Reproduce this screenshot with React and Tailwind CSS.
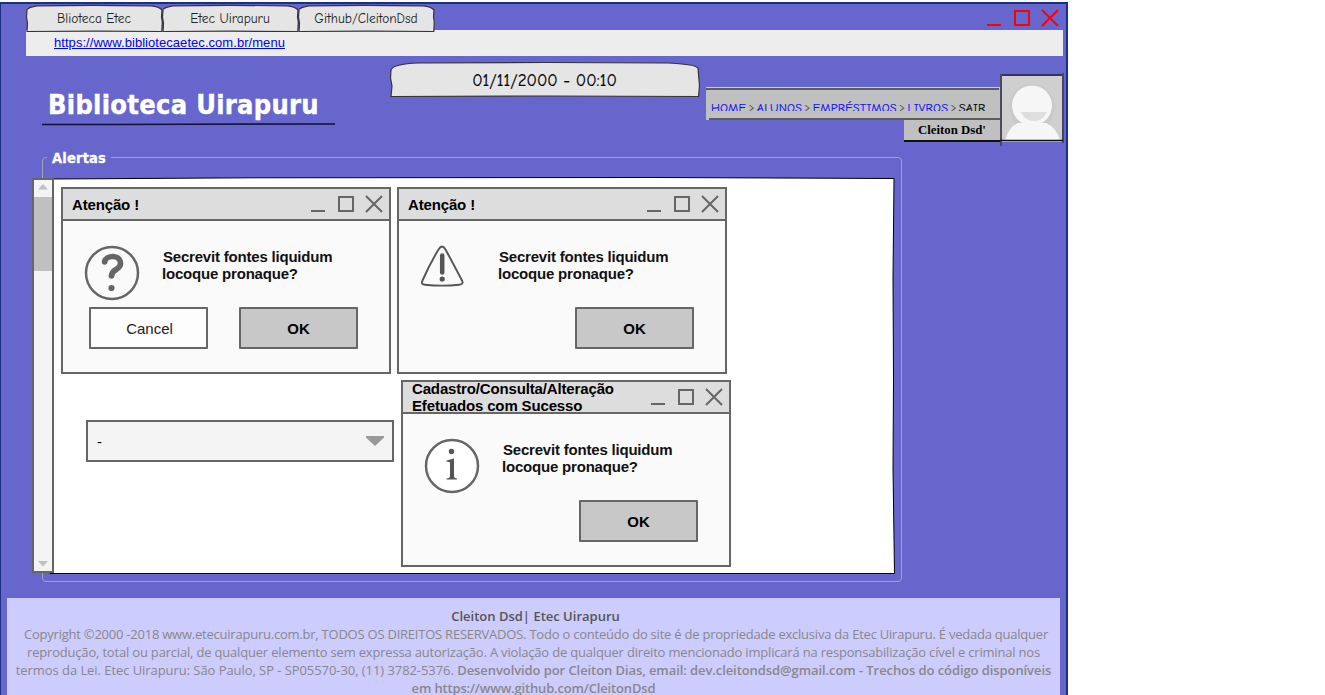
const HAND = "font-['Comic_Sans_MS','Comic_Neue',Lato,sans-serif]";

function T({ className = '', children }) {
  return <span className={`inline-block whitespace-nowrap ${className}`}>{children}</span>;
}

function Tab({ children }) {
  return (
    <div className={`relative h-[27px] w-[136px] text-center text-[13.4px] leading-[27px] text-[#222] ${HAND}`}>
      <svg className="absolute inset-0 overflow-visible" width="136" height="27" viewBox="0 0 136 27">
        <path d="M1 26.5 L1.5 18 L.5 12 L1 4.500 Q3 2 11 .8 L66 .3 L125 .8 Q133 1.500 136 5 L135.500 12 L136.300 17 L135.800 26.500 L70 26.200 Z" fill="#e5e5e5" stroke="#33333b" strokeWidth="1.200" />
      </svg>
      <T className="relative">{children}</T>
    </div>
  );
}

function WindowIcons({ color, className = '' }) {
  return (
    <svg className={className} width="74" height="20" viewBox="0 0 74 20" fill="none" stroke={color} strokeWidth="2">
      <path d="M1 17H15M29 3H43V17H29ZM56 2L72 18M72 2L56 18" />
    </svg>
  );
}

function Button({ primary, children }) {
  return (
    <button className={`h-[42px] w-[119px] rounded-[1px] border-2 border-[#666] text-[15px] ${primary ? 'bg-[#c8c8c8] font-bold text-black' : 'bg-[#fdfdfd] pl-[2px] text-[#222]'}`}>
      <T className="pt-[2px]">{children}</T>
    </button>
  );
}

function Dialog({ title, icon, cancel, className = '' }) {
  return (
    <section className={`flex h-[187px] w-[330px] flex-col border-2 border-[#666] bg-[#fafafa] font-['Liberation_Sans',Arial,sans-serif] ${className}`}>
      <header className="flex h-[32px] shrink-0 items-center justify-between border-b-2 border-[#666] bg-[#ddd] pl-[9px] pr-[5px] text-[15px] font-bold leading-[17px] tracking-[-0.15px] text-black">
        <div>{title}</div>
        <WindowIcons color="#666" />
      </header>
      <div className="flex h-[86px] shrink-0">
        <div className="w-[99px] pl-[19px] pt-[22px]">{icon}</div>
        <p className="pt-[27px] text-[15px] font-bold leading-[17px] tracking-[-0.2px] text-[#111]">
          <T className="pl-px">Secrevit fontes liquidum</T><br /><T>locoque pronaque?</T>
        </p>
      </div>
      <div className="flex justify-end gap-[31px] pr-[31px]">
        {cancel && <Button>Cancel</Button>}
        <Button primary>OK</Button>
      </div>
    </section>
  );
}

const question = (
  <svg width="58" height="58" viewBox="0 0 58 58" fill="none">
    <circle cx="30" cy="30" r="26" stroke="#666" strokeWidth="2.500" />
    <path d="M22.300 19C24.500 11.500 38.500 11.500 38.500 20.500C38.500 27.500 29.500 25.500 29.500 33" stroke="#666" strokeWidth="5.600" />
    <circle cx="22.600" cy="19" r="2.800" fill="#666" />
    <circle cx="29.500" cy="33" r="2.800" fill="#666" />
    <circle cx="29.500" cy="45" r="3.100" fill="#666" />
  </svg>
);
const warning = (
  <svg width="58" height="58" viewBox="0 0 58 58" fill="none">
    <path d="M20.500 6.500C23 2.500 25 2.500 27.500 6.500Q37 24 44 37.500Q46 41.500 41 41.700Q24 43.500 7 41.700Q2.500 41.500 4.500 37.500Q12 20.500 20.500 6.500Z" stroke="#555" strokeWidth="1.900" />
    <path d="M24.200 12.500V29.500" stroke="#555" strokeWidth="4.500" strokeLinecap="round" />
    <circle cx="24.200" cy="36" r="2.600" fill="#555" />
  </svg>
);
const info = (
  <svg width="58" height="58" viewBox="0 0 58 58" fill="none">
    <circle cx="30" cy="30" r="28" fill="#fff" />
    <circle cx="30" cy="30" r="26" stroke="#666" strokeWidth="2.500" />
    <circle cx="29.500" cy="15.500" r="2.700" fill="#555" />
    <path d="M24.500 24.500L32 22.500V40Q32 42 35 42.500V43.500H24.500V42.500Q28 42 28 40V27Q28 25.500 24.500 25.500Z" fill="#555" />
  </svg>
);

function Sep() {
  return <i className="relative -top-px px-[2.3px] text-[11px] not-italic text-[#555]">&gt;</i>;
}

export default function App() {
  return (
    <div className="flex h-[695px] w-[1325px] overflow-hidden bg-white">
      <main className="mt-[2px] flex h-[693px] w-[1068px] shrink-0 flex-col overflow-hidden border-l border-r-2 border-t-2 border-[#1a3080] bg-[#6666cc]">
        <div className="z-10 flex h-[26px] items-start justify-between pl-[25px] pr-[6px] pt-[1px]">
          <nav className="flex">
            <Tab>Blioteca Etec</Tab>
            <Tab>Etec Uirapuru</Tab>
            <Tab>Github/CleitonDsd</Tab>
          </nav>
          <WindowIcons color="#f00" className="mt-[3px]" />
        </div>
        <div className="ml-[25px] mr-[3px] h-[26px] shrink-0 bg-[#ededed] pl-[28px] text-[13px] leading-[26px] font-['Liberation_Sans',Arial,sans-serif]">
          <a className="text-[#0000ff]"><T className="tracking-[0.05px] underline">https://www.bibliotecaetec.com.br/menu</T></a>
        </div>
        <header className="flex h-[90px] shrink-0">
          <div className="w-[348px] pl-[41px]">
            <h1 className="mt-[30px] h-[37px] pl-[6px] text-[27px] font-bold leading-[37px] tracking-[0.3px] text-white font-['DejaVu_Sans_Condensed','DejaVu_Sans',sans-serif] [-webkit-text-stroke:0.4px_white]"><T>Biblioteca Uirapuru</T></h1>
            <svg width="294" height="3" viewBox="0 0 294 3"><path d="M0 1.500H70L220 1H293" stroke="#111133" strokeWidth="1.600" /></svg>
          </div>
          <div className={`relative ml-[41px] mt-[6px] h-[35px] w-[310px] text-center text-[17.05px] leading-[37px] text-black [-webkit-text-stroke:0.2px_black] ${HAND}`}>
            <svg className="absolute inset-0 overflow-visible" width="310" height="35" viewBox="0 0 310 35">
              <path d="M1 34.500L2 24L.5 16L1 8Q3 2 28 1L155 .5L277 1Q304 2 308 6L309 18L309.500 24L308.500 34.500L160 34Z" fill="#e5e5e5" stroke="#33333b" strokeWidth="1.200" />
            </svg>
            <T className="relative pr-px">01/11/2000 - 00:10</T>
          </div>
          <div className="ml-[6px] w-[295px]">
            <div className="mt-[31px] h-[33px] border-t border-[#ccc] bg-[#c0c0c0]">
              <div className="h-[2px] w-[293px] bg-[#5c5c5c]" />
              <nav className={`mt-[8px] h-[13px] overflow-hidden pl-[5px] text-[12.3px] leading-[20px] tracking-[0.16px] text-[#0d0dff] [-webkit-text-stroke:0.15px_currentColor] ${HAND}`}>
                <T>HOME<Sep />ALUNOS<Sep />EMPRÉSTIMOS<Sep />LIVROS<Sep /><span className="text-black">SAIR</span></T>
              </nav>
              <div className="ml-[3px] mt-[7px] h-[2px] bg-[#5c5c5c]" />
            </div>
            <div className="ml-[198px] h-[22px] border-b-2 border-[#111] bg-[#c0c0c0] pl-[14px] text-[12.8px] font-bold leading-[21px] text-black font-['Liberation_Serif',serif]"><T>Cleiton Dsd&apos;</T></div>
          </div>
          <svg className="-ml-px mt-[17px]" width="64" height="74" viewBox="0 0 64 74">
            <rect x="0" y="2" width="63" height="67" fill="#cfcfcf" />
            <circle cx="32" cy="34" r="23" fill="#c4c4c4" opacity=".5" />
            <path d="M5 67Q9 54 18 50H46Q56 54 60 67Z" fill="#f6f6f6" />
            <circle cx="32" cy="32.500" r="20" fill="#f6f6f6" />
            <path d="M21 39H47Q43 48 34 48Q25 48 21 39Z" fill="#dedede" />
            <path d="M0 2H63" stroke="#333366" strokeWidth="2" />
            <path d="M1 1V73" stroke="#4a4a60" strokeWidth="2" />
            <path d="M63 0V70" stroke="#444466" strokeWidth="2" />
            <path d="M0 67.500H63" stroke="#111" strokeWidth="1.500" />
          </svg>
        </header>
        <div className="relative ml-[31px] mt-[3px] h-[434px] w-[871px] shrink-0">
          <div className="absolute left-[10px] top-[8px] h-[425px] w-[860px] rounded-[4px] border border-[#a3a3b8]" />
          <h2 className="relative ml-[15px] h-[18px] w-[64px] bg-[#6666cc] pl-[5px] text-[14.5px] font-bold leading-[18px] tracking-[0.2px] text-white font-['DejaVu_Sans_Condensed','DejaVu_Sans',sans-serif] [-webkit-text-stroke:0.3px_white]"><T>Alertas</T></h2>
          <div className="relative mt-[11px] flex">
            <div className="z-10 flex h-[395px] w-[22px] flex-col items-center border-2 border-[#666] bg-[#f4f4f4]">
              <svg width="18" height="17" viewBox="0 0 18 17"><path d="M4 9.500L9 4L14 9.500Z" fill="#c0c0c0" /></svg>
              <div className="h-[74px] w-full bg-[#c0c0c0]" />
              <svg className="mt-auto" width="18" height="17" viewBox="0 0 18 17"><path d="M4 7L9 12.500L14 7Z" fill="#c0c0c0" /></svg>
            </div>
            <div className="relative h-[396px] w-[842px]">
              <svg className="absolute inset-0 overflow-visible" width="842" height="396" viewBox="0 0 842 396">
                <path d="M-4 395.500V1L200 -.2L600 -.5L840 .5L839 100L839.500 200L839 290L840.500 395.500Z" fill="#fff" stroke="#000" strokeWidth="1" />
              </svg>
              <div className="relative grid grid-cols-[330px_334px] gap-x-[6px] gap-y-[6px] pl-[7px] pt-[9px]">
                <Dialog cancel icon={question} title={<T>Atenção !</T>} />
                <Dialog icon={warning} title={<T>Atenção !</T>} />
                <div className="ml-[25px] mt-[40px] flex h-[42px] w-[308px] items-center justify-between border-2 border-[#666] bg-[#f4f4f4] pl-[9px] pr-[7px] text-[15px] text-black font-['Liberation_Sans',Arial,sans-serif]">
                  <span className="pt-[3px]">-</span>
                  <svg width="20" height="12" viewBox="0 0 20 12"><path d="M1 1H19V2.500L10 11L1 2.500Z" fill="#999" /></svg>
                </div>
                <Dialog className="ml-[4px]" icon={info} title={<><T>Cadastro/Consulta/Alteração</T><br /><T>Efetuados com Sucesso</T></>} />
              </div>
            </div>
          </div>
        </div>
        <footer className="ml-[6px] mt-[15px] h-[100px] w-[1053px] shrink-0 bg-[#ccccff] pt-[9px] text-center text-[13px] leading-[18px] text-[#888] font-['Trebuchet_MS','Open_Sans',sans-serif]">
          <div className="pl-[4px] font-semibold text-[#555]"><T>Cleiton Dsd| Etec Uirapuru</T></div>
          <div className="pl-[5px] tracking-[-0.229px]"><T>Copyright ©2000 -2018 www.etecuirapuru.com.br, TODOS OS DIREITOS RESERVADOS. Todo o conteúdo do site é de propriedade exclusiva da Etec Uirapuru. É vedada qualquer</T></div>
          <div className="tracking-[-0.186px]"><T>reprodução, total ou parcial, de qualquer elemento sem expressa autorização. A violação de qualquer direito mencionado implicará na responsabilização cível e criminal nos</T></div>
          <div className="whitespace-nowrap"><T className="tracking-[-0.063px]">termos da Lei. Etec Uirapuru: São Paulo, SP - SP05570-30, (11) 3782-5376.</T> <T className="font-semibold tracking-[-0.08px]">Desenvolvido por Cleiton Dias, email: dev.cleitondsd@gmail.com - Trechos do código disponíveis</T></div>
          <T className="font-semibold tracking-[-0.16px]">em https://www.github.com/CleitonDsd</T>
        </footer>
      </main>
    </div>
  );
}
